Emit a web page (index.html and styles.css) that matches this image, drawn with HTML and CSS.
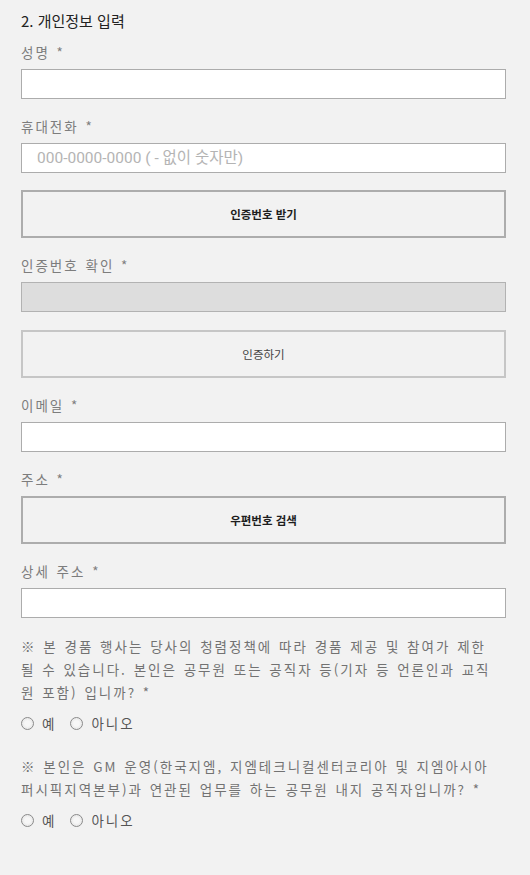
FILE: index.html
```html
<!DOCTYPE html>
<html lang="ko">
<head>
<meta charset="utf-8">
<title>개인정보 입력</title>
<link rel="stylesheet" href="styles.css">
</head>
<body>
<form class="form">
  <h2 class="title">2. 개인정보 입력</h2>

  <div class="field">
    <label class="label">성명 *</label>
    <input class="input" type="text">
  </div>

  <div class="field">
    <label class="label">휴대전화 *</label>
    <input class="input input-phone" type="text" placeholder="000-0000-0000 ( - 없이 숫자만)">
  </div>

  <button type="button" class="btn btn-strong">인증번호 받기</button>

  <div class="field">
    <label class="label">인증번호 확인 *</label>
    <input class="input" type="text" disabled>
  </div>

  <button type="button" class="btn btn-light">인증하기</button>

  <div class="field">
    <label class="label">이메일 *</label>
    <input class="input" type="text">
  </div>

  <div class="field">
    <label class="label">주소 *</label>
    <button type="button" class="btn btn-strong btn-inline">우편번호 검색</button>
  </div>

  <div class="field">
    <label class="label">상세 주소 *</label>
    <input class="input" type="text">
  </div>

  <p class="notice">※ 본 경품 행사는 당사의 청렴정책에 따라 경품 제공 및 참여가 제한<br>될 수 있습니다. 본인은 공무원 또는 공직자 등(기자 등 언론인과 교직<br>원 포함) 입니까? *</p>
  <div class="radios">
    <label class="radio"><input type="radio" name="q1">예</label>
    <label class="radio"><input type="radio" name="q1">아니오</label>
  </div>

  <p class="notice notice-second">※ 본인은 GM 운영(한국지엠, 지엠테크니컬센터코리아 및 지엠아시아<br>퍼시픽지역본부)과 연관된 업무를 하는 공무원 내지 공직자입니까? *</p>
  <div class="radios">
    <label class="radio"><input type="radio" name="q2">예</label>
    <label class="radio"><input type="radio" name="q2">아니오</label>
  </div>
</form>
</body>
</html>
```

FILE: styles.css
```css
* {
  box-sizing: border-box;
}

html, body {
  margin: 0;
  padding: 0;
  background: #f2f2f2;
}

body {
  font-family: "Noto Sans CJK KR", "Noto Sans", sans-serif;
  color: #222;
}

.form {
  display: flex;
  flex-direction: column;
  padding: 10px 24px 40px 21px;
}

.title {
  margin: 0;
  font-size: 15px;
  font-weight: 400;
  line-height: 22px;
  color: #222;
}

.field {
  display: flex;
  flex-direction: column;
  margin-top: 17px;
}

.title + .field {
  margin-top: 10px;
}

.label {
  font-size: 13.5px;
  line-height: 20px;
  letter-spacing: 2px;
  word-spacing: 1px;
  color: #7d7d7d;
  margin-bottom: 7px;
}

.input {
  display: block;
  width: 100%;
  height: 30px;
  margin: 0;
  border: 1px solid #acacac;
  border-radius: 0;
  background: #fff;
  padding: 0 15px;
  font-family: Roboto, "Noto Sans CJK KR", sans-serif;
  font-size: 15.5px;
  color: #333;
  outline: none;
}

.input::placeholder {
  color: #b4b4b4;
}

.input:disabled {
  background: #dddddd;
  border-color: #b2b2b2;
}

.btn {
  display: block;
  width: 100%;
  height: 48px;
  margin: 17px 0 0;
  padding: 0;
  background: #f2f2f2;
  border-radius: 0;
  font-family: "Noto Sans CJK KR", sans-serif;
  font-size: 11.5px;
  cursor: pointer;
}

.btn-strong {
  border: 2px solid #adadad;
  font-weight: 700;
  color: #1e1e1e;
}

.btn-light {
  margin-top: 18px;
  border: 2px solid #c6c6c6;
  font-weight: 400;
  color: #444;
}

.btn-inline {
  margin-top: 0;
}

.notice {
  margin: 17px 0 0;
  font-size: 13.5px;
  line-height: 23px;
  letter-spacing: 2px;
  word-spacing: 1px;
  color: #727272;
}

.notice-second {
  margin-top: 22px;
}

.radios {
  display: flex;
  align-items: center;
  gap: 14px;
  margin-top: 9px;
  height: 20px;
}

.radio {
  display: flex;
  align-items: center;
  font-size: 13.5px;
  letter-spacing: 2px;
  color: #555;
  line-height: 20px;
}

.radio input {
  appearance: none;
  -webkit-appearance: none;
  width: 13px;
  height: 13px;
  margin: 0 8px 0 0;
  border: 1px solid #8a8a8a;
  border-radius: 50%;
  background: radial-gradient(circle, #f7f7f7 0 35%, #ececec 60%);
}
```
